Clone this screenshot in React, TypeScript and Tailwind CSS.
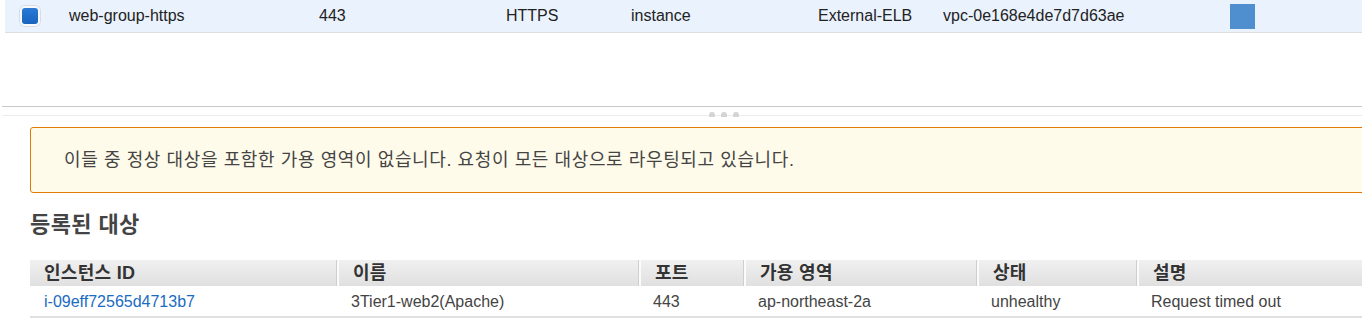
const font = { fontFamily: '"Liberation Sans", "Noto Sans CJK KR", sans-serif' };

const topCells = [
  { text: "web-group-https", w: "w-[250px]" },
  { text: "443", w: "w-[187px]" },
  { text: "HTTPS", w: "w-[125px]" },
  { text: "instance", w: "w-[187px]" },
  { text: "External-ELB", w: "w-[125px]" },
  { text: "vpc-0e168e4de7d7d63ae", w: "w-[287px]" },
];

const columns = [
  { title: "인스턴스 ID", w: "w-[307px]" },
  { title: "이름", w: "w-[302px]" },
  { title: "포트", w: "w-[105px]" },
  { title: "가용 영역", w: "w-[233px]" },
  { title: "상태", w: "w-[160px]" },
  { title: "설명", w: "flex-1" },
];

const row = [
  "i-09eff72565d4713b7",
  "3Tier1-web2(Apache)",
  "443",
  "ap-northeast-2a",
  "unhealthy",
  "Request timed out",
];

export default function App() {
  return (
    <div
      className="h-[331px] w-[1362px] overflow-hidden bg-white text-[#222]"
      style={font}
    >
      {/* selected target group row */}
      <div className="ml-[5px] flex h-[33px] items-center border-b border-[#dedede] bg-[#eaf2fd] text-[16px]">
        <div className="flex w-[64px] items-center pl-[15px]">
          <span className="block h-[20px] w-[20px] rounded-[5px] border-[2px] border-[#f6f8fb] bg-gradient-to-b from-[#2a7ad6] to-[#1863bd] shadow-[0_0_0_1px_#d8dde4]" />
        </div>
        {topCells.map((c) => (
          <div key={c.text} className={`${c.w} shrink-0`}>
            {c.text}
          </div>
        ))}
        <span className="mt-[1px] block h-[25px] w-[25px] bg-[#4f8fcf]" />
      </div>

      <div className="h-[73px]" />

      {/* split pane handle */}
      <div className="ml-[2px] border-t border-[#c8c8c8]" />
      <div className="relative ml-[2px] mt-[8px] border-t border-[#ececec]">
        <div className="absolute left-[707px] top-[-4px] flex gap-[6px]">
          <span className="block h-[5px] w-[6px] rounded-t-[3px] bg-[#d4d4d4]" />
          <span className="block h-[5px] w-[6px] rounded-t-[3px] bg-[#d4d4d4]" />
          <span className="block h-[5px] w-[6px] rounded-t-[3px] bg-[#d4d4d4]" />
        </div>
      </div>

      <div className="pl-[30px]">
        {/* warning box */}
        <div className="mt-[11px] flex h-[66px] w-[1345px] items-center rounded-[3px] border border-[#e07b00] bg-[#fffbea] pl-[33px] text-[18px] tracking-[0.6px] text-[#444]">
          이들 중 정상 대상을 포함한 가용 영역이 없습니다. 요청이 모든 대상으로 라우팅되고 있습니다.
        </div>

        <h2 className="mt-[18px] text-[22px] font-bold leading-[28px] tracking-[0.4px] text-[#444]">
          등록된 대상
        </h2>

        {/* registered targets table */}
        <div className="mt-[21px] w-[1340px]">
          <div className="flex h-[26px] bg-gradient-to-b from-[#f0f0f0] to-[#e0e0e0] text-[18px] font-bold leading-none tracking-[0.3px] text-[#333]">
            {columns.map((c, i) => (
              <div
                key={c.title}
                className={`${c.w} flex shrink-0 items-center pl-[14px] ${
                  i > 0 ? "border-l-2 border-l-[#fbfbfb]" : ""
                } ${i < columns.length - 1 ? "border-r border-r-[#cfcfcf]" : ""}`}
              >
                {c.title}
              </div>
            ))}
          </div>
          <div className="flex h-[32px] items-center border-b-2 border-[#e0e0e0] pt-[2px] text-[16px] text-[#444]">
            {row.map((v, i) => (
              <div
                key={v}
                className={`${columns[i].w} shrink-0 pl-[14px] ${
                  i === 0 ? "text-[#1a6bc2]" : ""
                }`}
              >
                {v}
              </div>
            ))}
          </div>
        </div>
      </div>
    </div>
  );
}
